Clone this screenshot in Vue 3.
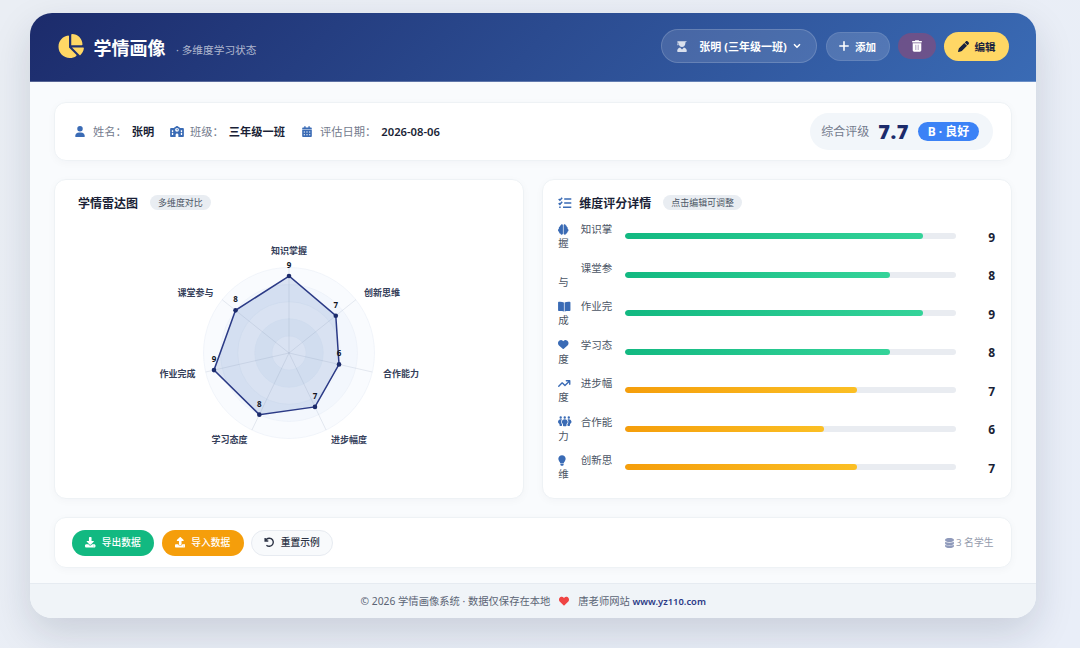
<template>
  <div class="page">
    <div class="app-card">
      <header class="header">
        <div class="brand">
          <svg class="brand-icon" viewBox="0 0 576 512"><path :d="icons.pie" /></svg>
          <h1>学情画像</h1>
          <span class="subtitle">· 多维度学习状态</span>
        </div>
        <div class="header-actions">
          <button class="pill student">
            <svg class="grad" viewBox="0 0 448 512"><path :d="icons.graduate" /></svg>
            <span>张明 (三年级一班)</span>
            <svg class="chevron" viewBox="0 0 12 8"><path d="M1.5 1.5 6 6l4.500-4.500" /></svg>
          </button>
          <button class="pill add">
            <svg class="plus" viewBox="0 0 12 12"><path d="M6 1v10M1 6h10" /></svg>
            <span>添加</span>
          </button>
          <button class="pill trash">
            <svg viewBox="0 0 448 512"><path fill-rule="evenodd" :d="icons.trash" /></svg>
          </button>
          <button class="pill edit">
            <svg viewBox="0 0 512 512"><path :d="icons.pen" /></svg>
            <span>编辑</span>
          </button>
        </div>
      </header>

      <main class="content">
        <section class="card info">
          <div class="info-item name">
            <svg viewBox="0 0 448 512"><path :d="icons.user" /></svg>
            <span class="label">姓名：</span>
            <strong>张明</strong>
          </div>
          <div class="info-item klass">
            <svg viewBox="0 0 640 512"><path fill-rule="evenodd" :d="icons.school" /></svg>
            <span class="label">班级：</span>
            <strong>三年级一班</strong>
          </div>
          <div class="info-item">
            <svg viewBox="0 0 448 512"><path fill-rule="evenodd" :d="icons.calendar" /></svg>
            <span class="label">评估日期：</span>
            <strong>2026-08-06</strong>
          </div>
          <div class="rating">
            <span class="rating-label">综合评级</span>
            <span class="rating-score">7.7</span>
            <span class="rating-badge">B · 良好</span>
          </div>
        </section>

        <div class="panels">
          <section class="card panel radar-panel">
            <div class="panel-title">
              <h2>学情雷达图</h2>
              <span class="tag">多维度对比</span>
            </div>
            <svg class="radar" viewBox="0 0 440 260">
              <circle
                v-for="ring in rings"
                :key="ring.r"
                cx="220"
                cy="130"
                :r="ring.r"
                :fill="ring.fill"
                class="ring"
              />
              <polygon :points="polygon" class="area" />
              <line
                v-for="p in points"
                :key="'axis' + p.name"
                x1="220"
                y1="130"
                :x2="p.ax"
                :y2="p.ay"
                class="axis"
              />
              <g v-for="p in points" :key="p.name">
                <circle :cx="p.x" :cy="p.y" r="2.300" class="dot" />
                <text :x="p.x" :y="p.y - 8" class="value">{{ p.score }}</text>
                <text :x="p.lx" :y="p.ly" :text-anchor="p.anchor" class="axis-name">{{ p.name }}</text>
              </g>
            </svg>
          </section>

          <section class="card panel detail-panel">
            <div class="panel-title">
              <svg class="tasks" viewBox="0 0 14 12">
                <path d="M.7 2 1.900 3.200 4.200.7M.7 6.100 1.900 7.300 4.200 4.800M6.200 2H13.300M6.200 6.100H13.300M5 10.300H13.300M1.200 10.300h1.500" />
              </svg>
              <h2>维度评分详情</h2>
              <span class="tag">点击编辑可调整</span>
            </div>
            <div v-for="d in dimensions" :key="d.name" class="row">
              <div class="row-label">
                <span class="row-icon">
                  <svg v-if="d.icon" :viewBox="d.box" :style="{ width: d.w + 'px' }">
                    <path :d="d.icon" />
                  </svg>
                </span>{{ d.name }}
              </div>
              <div class="track">
                <div :class="['bar', d.score >= 8 ? 'good' : 'mid']" :style="{ width: d.score * 10 + '%' }"></div>
              </div>
              <span class="score">{{ d.score }}</span>
            </div>
          </section>
        </div>

        <section class="card toolbar">
          <button class="tool export">
            <svg viewBox="0 0 512 512"><path fill-rule="evenodd" :d="icons.download" /></svg>
            <span>导出数据</span>
          </button>
          <button class="tool import">
            <svg viewBox="0 0 512 512"><path fill-rule="evenodd" :d="icons.upload" /></svg>
            <span>导入数据</span>
          </button>
          <button class="tool reset">
            <svg viewBox="0 0 12 12">
              <path class="undo" d="M1.300 1V4.600H4.900M1.700 4.400A4.600 4.600 0 1 1 2.800 9.300" />
            </svg>
            <span>重置示例</span>
          </button>
          <div class="count">
            <svg viewBox="0 0 448 512"><path :d="icons.database" /></svg>
            <span>3 名学生</span>
          </div>
        </section>
      </main>

      <footer class="footer">
        <span>© 2026 学情画像系统 · 数据仅保存在本地</span>
        <svg viewBox="0 0 512 512"><path :d="icons.heart" /></svg>
        <span>唐老师网站 <b>www.yz110.com</b></span>
      </footer>
    </div>
  </div>
</template>

<script setup>
import { computed } from 'vue';

const icons = {
  pie: 'M304 240V16.600c0-9 7-16.600 16-16.600C443.700 0 544 100.300 544 224c0 9-7.600 16-16.600 16H304zM32 272C32 150.700 122.100 50.300 239 34.300c9.200-1.300 17 6.100 17 15.400V288L412.500 444.500c6.700 6.700 6.200 17.700-1.500 23.100C371.800 495.600 323.800 512 272 512C139.500 512 32 404.600 32 272zm526.400 16c9.300 0 16.600 7.800 15.400 17c-7.700 55.900-34.600 105.600-73.900 142.300c-6 5.600-15.400 5.200-21.200-.7L320 288H558.400z',
  user: 'M224 256A128 128 0 1 0 224 0a128 128 0 1 0 0 256zm-45.700 48C79.800 304 0 383.800 0 482.300C0 498.700 13.300 512 29.700 512H418.300c16.400 0 29.700-13.300 29.700-29.700C448 383.800 368.200 304 269.700 304H178.300z',
  graduate: 'M20 10H428c16 0 20 20 4 26L380 70v50c0 90-70 160-156 160S68 210 68 120V84L50 78v50l14 50c2 9-3 18-12 18H16c-9 0-14-9-12-18l14-50V60C0 40 0 14 20 10zM133 305C58 316 0 383.800 0 462c0 34 14 50 34 50h380c20 0 34-16 34-50c0-78-58-146-133-157L224 390l-91-85z',
  school: 'M337.800 5.400C327-1.800 313-1.800 302.200 5.400L166.300 96H48C21.500 96 0 117.500 0 144V464c0 26.500 21.500 48 48 48H256V416c0-35.300 28.700-64 64-64s64 28.700 64 64v96H592c26.500 0 48-21.500 48-48V144c0-26.500-21.500-48-48-48H473.700L337.800 5.400zM96 192h32c8.800 0 16 7.200 16 16v64c0 8.800-7.200 16-16 16H96c-8.800 0-16-7.200-16-16V208c0-8.800 7.200-16 16-16zm400 16c0-8.800 7.200-16 16-16h32c8.800 0 16 7.200 16 16v64c0 8.800-7.200 16-16 16H512c-8.800 0-16-7.200-16-16V208zM96 320h32c8.800 0 16 7.200 16 16v64c0 8.800-7.200 16-16 16H96c-8.800 0-16-7.200-16-16V336c0-8.800 7.200-16 16-16zm400 16c0-8.800 7.200-16 16-16h32c8.800 0 16 7.200 16 16v64c0 8.800-7.200 16-16 16H512c-8.800 0-16-7.200-16-16V336zM232 176a88 88 0 1 1 176 0 88 88 0 1 1 -176 0zm88-48c-8.800 0-16 7.200-16 16v32c0 8.800 7.200 16 16 16h32c8.800 0 16-7.200 16-16s-7.200-16-16-16H336V144c0-8.800-7.200-16-16-16z',
  calendar: 'M128 0c17.700 0 32 14.300 32 32V64H288V32c0-17.700 14.300-32 32-32s32 14.300 32 32V64h48c26.500 0 48 21.500 48 48v56H0V112C0 85.500 21.500 64 48 64H96V32c0-17.700 14.300-32 32-32zM0 184H448V464c0 26.500-21.500 48-48 48H48c-26.500 0-48-21.500-48-48V184zM72 256v44h60v-44zM194 256v44h60v-44zM316 256v44h60v-44zM72 384v44h60v-44zM194 384v44h60v-44zM316 384v44h60v-44z',
  trash: 'M135 18c5-11 17-18 29-18H284c12 0 23 7 29 18l7 14h96c18 0 32 14 32 32s-14 32-32 32H32C14 96 0 82 0 64s14-32 32-32h96zM32 128H416V448c0 35-29 64-64 64H96c-35 0-64-29-64-64zM138 200v240h16V200zM216 200v240h16V200zM294 200v240h16V200z',
  pen: 'M362.700 19.300 314.300 67.700 444.300 197.700l48.400-48.400c25-25 25-65.500 0-90.500L453.300 19.300c-25-25-65.500-25-90.500 0zm-71 71L58.600 323.500c-10.400 10.400-18 23.300-22.200 37.400L1 481.200C-1.500 489.700.8 498.800 7 505s15.300 8.500 23.700 6.100l120.300-35.400c14.100-4.200 27-11.800 37.400-22.200L421.700 220.300 291.700 90.300z',
  heart: 'M47.600 300.400 228.300 469.100c7.500 7 17.400 10.900 27.700 10.900s20.200-3.900 27.700-10.900L464.400 300.400c30.400-28.300 47.600-68 47.600-109.500v-5.800c0-69.900-50.500-129.500-119.400-141C347 36.500 300.600 51.400 268 84L256 96 244 84c-32.600-32.600-79-47.500-124.600-39.900C50.500 55.600 0 115.200 0 185.100v5.800c0 41.500 17.200 81.200 47.600 109.500z',
  brain: 'M184 0c31 0 56 25 56 56V456c0 31-25 56-56 56-29 0-53-22-56-50-48 0-80-40-72-85C22 362 0 332 0 296c0-31 18-58 44-71-18-42 4-88 44-99-10-42 21-78 48-78 6-28 24-48 48-48zM328 0c-31 0-56 25-56 56V456c0 31 25 56 56 56 29 0 53-22 56-50 48 0 80-40 72-85 34-15 56-45 56-81 0-31-18-58-44-71 18-42-4-88-44-99 10-42-21-78-48-78-6-28-24-48-48-48z',
  book: 'M272 66C210 35 130 28 34 34 14 36 0 50 0 68V432c0 20 16 34 36 33 90-4 166 0 236 25zM304 66C366 35 446 28 542 34c20 2 34 16 34 34V432c0 20-16 34-36 33-90-4-166 0-236 25z',
  trend: 'M384 160c-18 0-32-14-32-32s14-32 32-32H544c18 0 32 14 32 32V288c0 18-14 32-32 32s-32-14-32-32V205L343 375c-12 12-33 12-45 0L192 269 55 407c-13 12-33 12-46 0s-12-33 0-46L169 201c13-12 33-12 46 0L320 307 467 160z',
  people: 'M72 64a56 56 0 1 1 112 0A56 56 0 1 1 72 64zM264 64a56 56 0 1 1 112 0 56 56 0 1 1-112 0zM456 64a56 56 0 1 1 112 0 56 56 0 1 1-112 0zM128 145c24 0 44 6 60 18-26 28-40 66-40 107 0 50 18 90 46 116v40c0 24-14 42-32 42h-60c-18 0-32-18-32-42v-56C32 350 0 316 0 272c0-70 58-127 128-127zM512 145c-24 0-44 6-60 18 26 28 40 66 40 107 0 50-18 90-46 116v40c0 24 14 42 32 42h60c18 0 32-18 32-42v-56c38-20 70-54 70-98 0-70-58-127-128-127zM320 145c80 0 140 56 140 127 0 46-22 82-56 104v68c0 20-16 36-36 36h-96c-20 0-36-16-36-36v-68c-34-22-56-58-56-104 0-71 60-127 140-127z',
  bulb: 'M272 384c10-32 30-59 50-86C350 263 368 222 368 176 368 79 289 0 192 0S16 79 16 176c0 46 18 87 46 122 20 27 40 54 50 86zM192 512c44 0 80-36 80-80V416H112v16c0 44 36 80 80 80z',
  download: 'M320 32c0-18-14-32-32-32h-64c-18 0-32 14-32 32V192h-84c-24 0-36 28-19 45L233 374c13 13 33 13 46 0L423 237c17-17 5-45-19-45h-84zM64 352c-35 0-64 29-64 64v32c0 35 29 64 64 64H448c35 0 64-29 64-64V416c0-35-29-64-64-64H346l-45 45c-25 25-66 25-91 0l-45-45zM432 420a20 20 0 1 1 0 40 20 20 0 1 1 0-40z',
  upload: 'M320 352c0 18-14 32-32 32h-64c-18 0-32-14-32-32V190h-84c-24 0-36-28-19-45L233 9c13-12 33-12 46 0L423 145c17 17 5 45-19 45h-84zM48 352H160a64 64 0 0 0 64 64h64a64 64 0 0 0 64-64H464c26 0 48 22 48 48v64c0 26-22 48-48 48H48c-26 0-48-22-48-48v-64c0-26 22-48 48-48zM432 460a20 20 0 1 0 0-40 20 20 0 1 0 0 40z',
  database: 'M448 80v48c0 44-100 80-224 80S0 172 0 128V80C0 36 100 0 224 0S448 36 448 80zM393 215c21-7 40-17 55-29V288c0 44-100 80-224 80S0 332 0 288V186c15 12 34 22 55 29 45 16 105 25 169 25s124-9 169-25zM0 346c15 12 34 21 55 29 45 16 105 25 169 25s124-9 169-25c21-8 40-17 55-29v86c0 44-100 80-224 80S0 476 0 432z',
};

// Порядок соответствует обходу радара против часовой стрелки
const dimensions = [
  { name: '知识掌握', score: 9, icon: icons.brain, box: '0 0 512 512', w: 10.5, lx: 220, ly: 31, anchor: 'middle' },
  { name: '课堂参与', score: 8, icon: '', lx: 144.5, ly: 72.5, anchor: 'end' },
  { name: '作业完成', score: 9, icon: icons.book, box: '0 0 576 512', w: 12.5, lx: 126.5, ly: 154, anchor: 'end' },
  { name: '学习态度', score: 8, icon: icons.heart, box: '0 0 512 512', w: 10.5, lx: 178.5, ly: 219.5, anchor: 'end' },
  { name: '进步幅度', score: 7, icon: icons.trend, box: '0 0 576 512', w: 12.5, lx: 262, ly: 219.5, anchor: 'start' },
  { name: '合作能力', score: 6, icon: icons.people, box: '0 0 640 512', w: 13.5, lx: 314, ly: 154, anchor: 'start' },
  { name: '创新思维', score: 7, icon: icons.bulb, box: '0 0 384 512', w: 8, lx: 295, ly: 72.5, anchor: 'start' },
];

const RADIUS = 85.5;
const rings = [
  { r: RADIUS, fill: '#f9fbfe' },
  { r: RADIUS * 0.8, fill: '#f3f7fd' },
  { r: RADIUS * 0.6, fill: '#f9fbfe' },
  { r: RADIUS * 0.4, fill: '#f0f5fb' },
  { r: RADIUS * 0.2, fill: '#f9fbfe' },
];

const points = computed(() =>
  dimensions.map((d, i) => {
    const angle = -Math.PI / 2 - (i * 2 * Math.PI) / dimensions.length;
    const cos = Math.cos(angle);
    const sin = Math.sin(angle);
    const r = (RADIUS * d.score) / 10;
    return {
      ...d,
      x: 220 + r * cos,
      y: 130 + r * sin,
      ax: 220 + RADIUS * cos,
      ay: 130 + RADIUS * sin,
    };
  })
);

const polygon = computed(() => points.value.map(p => `${p.x},${p.y}`).join(' '));
</script>

<style>
body {
  background: #e9eef7;
}
</style>

<style scoped>
* {
  box-sizing: border-box;
}

.page {
  height: 648px;
  padding: 13px 44.5px 30px 30px;
  overflow: hidden;
  background: linear-gradient(135deg, #eaeef4 0%, #e9eef8 100%);
  font-family: "Noto Sans", "Noto Sans CJK SC", sans-serif;
  color: #1a1f36;
}

.app-card {
  display: flex;
  flex-direction: column;
  height: 605px;
  overflow: hidden;
  border-radius: 22px;
  background: #f9fbfd;
  box-shadow: 0 15px 38px rgba(20, 35, 60, 0.15);
}

.header {
  display: flex;
  align-items: center;
  justify-content: space-between;
  height: 68.500px;
  flex: none;
  padding: 0 26.500px 1px 27px;
  border-bottom: 1px solid rgba(255, 255, 255, 0.25);
  background: linear-gradient(135deg, #1c2b6b 0%, #3a6bb5 100%) border-box;
}

.brand,
.header-actions,
.panel-title,
.info,
.info-item,
.rating,
.toolbar,
.tool,
.count,
.footer {
  display: flex;
  align-items: center;
}

.brand-icon {
  width: 27px;
  height: 24px;
  fill: #ffd765;
}

h1 {
  margin: 3px 0 0 9.500px;
  font-size: 18px;
  line-height: 24px;
  font-weight: 700;
  color: #fff;
}

.subtitle {
  margin: 7px 0 0 10.500px;
  font-size: 10.700px;
  line-height: 16px;
  color: rgba(255, 255, 255, 0.65);
}

.header-actions {
  gap: 8.500px;
}

button {
  padding: 0;
  border: none;
  font-family: inherit;
  cursor: pointer;
}

.pill {
  display: flex;
  align-items: center;
  justify-content: center;
  border-radius: 20px;
  font-size: 10.500px;
  line-height: 16px;
  font-weight: 700;
  color: #fff;
  fill: #fff;
}

.pill span {
  padding-top: 1px;
}

.student {
  width: 156.500px;
  height: 34px;
  border: 1px solid rgba(255, 255, 255, 0.16);
  background: rgba(255, 255, 255, 0.12);
  font-size: 11px;
}

.grad {
  width: 10px;
  height: 11px;
  margin-right: 12.500px;
  opacity: 0.8;
}

.chevron {
  width: 8px;
  height: 6px;
  margin-left: 6px;
  fill: none;
  stroke: #fff;
  stroke-width: 2.200;
}

.add {
  width: 64px;
  height: 29px;
  border: 1px solid rgba(255, 255, 255, 0.1);
  background: rgba(255, 255, 255, 0.15);
}

.plus {
  width: 10px;
  height: 10px;
  margin-right: 6px;
  stroke: #fff;
  stroke-width: 1.900;
  stroke-linecap: round;
}

.trash {
  width: 37.500px;
  height: 26px;
  background: rgba(175, 65, 100, 0.45);
}

.trash svg {
  width: 10px;
  height: 12px;
}

.edit {
  width: 65px;
  height: 29px;
  background: #ffd765;
  color: #1a2340;
  fill: #1a2340;
}

.edit svg {
  width: 11px;
  height: 11px;
  margin-right: 6px;
}

.content {
  display: flex;
  flex-direction: column;
  gap: 18px;
  flex: 1;
  padding: 20.500px 24px 0;
}

.card {
  border: 1px solid #eef2f5;
  border-radius: 12px;
  background: #fff;
  box-shadow: 0 2px 8px rgba(20, 35, 60, 0.03);
}

.info {
  height: 59px;
  padding: 0 17.500px 0 20px;
  font-size: 11.250px;
  line-height: 16px;
}

.info-item svg {
  width: 10px;
  height: 11px;
  margin-right: 8px;
  fill: #3a6bb5;
}

.info-item .label {
  color: #747b8d;
}

.info-item strong {
  margin-left: 5px;
  font-weight: 600;
}

.name {
  width: 95px;
}

.klass {
  width: 132px;
}

.klass svg {
  width: 14px;
  margin-right: 6px;
}

.rating {
  height: 37px;
  margin-left: auto;
  padding: 0 14px 0 11.500px;
  border-radius: 20px;
  background: #f2f6fa;
}

.rating-label {
  padding-top: 1px;
  font-size: 12px;
  color: #747b8d;
}

.rating-score {
  margin-left: 9px;
  font-size: 20px;
  line-height: 26px;
  font-weight: 900;
  letter-spacing: 0.500px;
  color: #1c2b6b;
}

.rating-badge {
  width: 61px;
  height: 19px;
  margin-left: 9px;
  border-radius: 10px;
  background: #3b82f6;
  font-size: 12px;
  line-height: 20px;
  font-weight: 700;
  text-align: center;
  color: #fff;
}

.panels {
  display: grid;
  grid-template-columns: 1fr 1fr;
  gap: 18px;
}

.panel {
  height: 320px;
}

.radar-panel {
  padding: 13px 14px 0 23px;
}

.detail-panel {
  padding: 13px 15.500px 0 15.300px;
}

.panel-title {
  height: 20px;
}

h2 {
  margin: 0;
  padding-top: 1px;
  font-size: 12px;
  line-height: 16px;
  font-weight: 700;
}

.tag {
  height: 15px;
  margin: -1px 0 0 11.500px;
  padding: 0 8.500px;
  border-radius: 8px;
  background: #e9edf2;
  font-size: 8.950px;
  line-height: 15px;
  color: #4b5565;
}

.tasks {
  width: 14px;
  height: 12px;
  margin-right: 7px;
  fill: none;
  stroke: #3a6bb5;
  stroke-width: 1.500;
}

.radar {
  display: block;
  width: 440px;
  height: 260px;
  margin: 10px 0 0 -9px;
}

.ring {
  stroke: #e9eff6;
  stroke-width: 0.600;
}

.axis {
  stroke: rgba(120, 140, 170, 0.22);
  stroke-width: 0.800;
}

.area {
  fill: rgba(58, 107, 181, 0.17);
  stroke: #2b3a86;
  stroke-width: 1.500;
}

.dot {
  fill: #1c2b6b;
}

.value {
  font-size: 8px;
  font-weight: 700;
  text-anchor: middle;
  fill: #11151f;
}

.axis-name {
  font-size: 9px;
  font-weight: 600;
  fill: #35405a;
}

.row {
  display: flex;
  align-items: center;
  height: 28.500px;
  margin-bottom: 10px;
}

.panel-title + .row {
  margin-top: 9px;
}

.row-label {
  width: 57px;
  font-size: 10.500px;
  line-height: 14.250px;
  color: #4b5565;
}

.row-icon {
  display: inline-block;
  width: 22.500px;
  height: 11px;
  vertical-align: -1.500px;
}

.row-icon svg {
  display: block;
  height: 11px;
  fill: #3a6bb5;
}

.track {
  width: 331px;
  height: 6px;
  margin-left: 10.200px;
  overflow: hidden;
  border-radius: 3px;
  background: #e9ecf1;
}

.bar {
  height: 100%;
  border-radius: 3px;
}

.good {
  background: linear-gradient(90deg, #12b981, #34d399);
}

.mid {
  background: linear-gradient(90deg, #f59e0b, #fbbf24);
}

.score {
  margin: 3px 0 0 auto;
  font-size: 12px;
  line-height: 16px;
  font-weight: 700;
}

.toolbar {
  gap: 7.500px;
  height: 51px;
  padding: 0 17px;
}

.tool {
  justify-content: center;
  gap: 6px;
  width: 82px;
  height: 26px;
  border-radius: 13px;
  font-size: 9.750px;
  line-height: 14px;
  font-weight: 500;
  color: #fff;
  fill: #fff;
}

.tool span {
  padding-top: 1px;
}

.tool svg {
  width: 10.500px;
  height: 10.500px;
}

.export {
  background: #12b981;
}

.import {
  background: #f59e0b;
}

.reset {
  border: 1px solid #e7ebf1;
  background: #f8fafc;
  color: #2c3345;
}

.undo {
  fill: none;
  stroke: #2c3345;
  stroke-width: 1.600;
}

.count {
  gap: 2px;
  margin-left: auto;
  padding-top: 1px;
  font-size: 9.800px;
  line-height: 14px;
  color: #949bad;
}

.count svg {
  width: 9px;
  height: 10px;
  fill: #8f9abb;
}

.footer {
  justify-content: center;
  height: 35.500px;
  flex: none;
  padding: 1px 0 0 1px;
  border-top: 1px solid #e6ebf1;
  background: #f0f4f8;
  font-size: 10.300px;
  line-height: 16px;
  color: #5b6475;
}

.footer svg {
  width: 10px;
  height: 10px;
  margin: 0 9px;
  fill: #ef4444;
}

.footer b {
  font-weight: 600;
  font-size: 9.400px;
  color: #2b3a86;
}
</style>
